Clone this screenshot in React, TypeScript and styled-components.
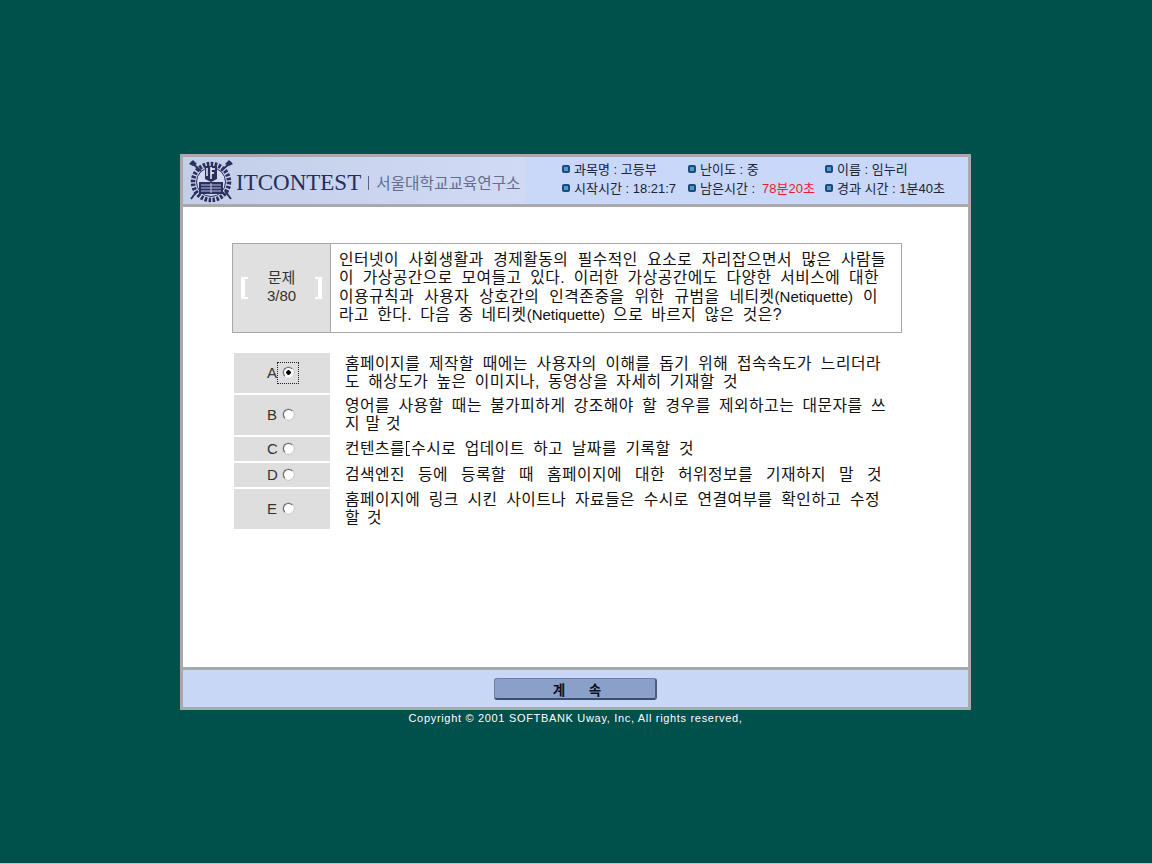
import React from 'react'
import styled, { createGlobalStyle } from 'styled-components'

const bodyFont = `"Liberation Sans", "Noto Sans CJK KR", sans-serif`

const GlobalStyle = createGlobalStyle`
	html,
	body {
		margin: 0;
		padding: 0;
		background: #00504c;
		font-family: ${bodyFont};
	}

	* {
		box-sizing: border-box;
	}
`

const Page = styled.div`
	width: 1152px;
	height: 864px;
	padding: 154px 0 0 180px;
	overflow: hidden;
	background: #00504c;
	border-bottom: 1px solid #a9cdc9;
`

const Window = styled.div`
	width: 791px;
	height: 556px;
	border: 3px solid #a9a9a9;
	background: #fff;
	display: flex;
	flex-direction: column;
`

const Header = styled.header`
	height: 50px;
	border-bottom: 3px solid #a9a9a9;
	background: linear-gradient(90deg, #c3cee8 0, #d0daf5 340px, #c9d7f8 345px);
	display: flex;
	align-items: center;
`

const Brand = styled.div`
	width: 379px;
	padding: 1px 0 0 5px;
	display: flex;
	align-items: center;
`

const BrandName = styled.span`
	margin: 3px 0 0 2px;
	font-family: "Liberation Serif", serif;
	font-size: 23px;
	color: #262c5c;
`

const BrandOrg = styled.span`
	margin: 3px 0 0 7px;
	padding-left: 7px;
	border-left: 1px solid #5d6488;
	font-family: "Noto Sans CJK KR", sans-serif;
	font-size: 15.7px;
	line-height: 14px;
	color: #666c8e;
	white-space: nowrap;
`

const Info = styled.div`
	margin-top: -5px;
	display: grid;
	grid-template-columns: 126px 137px auto;
	grid-auto-rows: 19px;
	font-size: 13px;
	color: #20243a;
`

const InfoItem = styled.div`
	display: flex;
	align-items: center;
	gap: 4px;
	white-space: nowrap;
`

const Bullet = styled.i`
	width: 8px;
	height: 8px;
	border-radius: 2px;
	border: 2px solid #1d4a78;
	background: #4f9bd0;
`

const Alert = styled.span`
	color: #ea1c30;
	margin-left: 3px;
`

const Main = styled.main`
	flex: 1;
	padding: 36px 0 0 49px;
`

const Question = styled.section`
	width: 670px;
	height: 90px;
	border: 1px solid #a8a8a8;
	display: flex;
`

const QuestionNo = styled.div`
	width: 98px;
	padding: 0 8px;
	background: #e0e0e0;
	border-right: 1px solid #a8a8a8;
	display: flex;
	align-items: center;
	justify-content: space-between;
`

const Bracket = styled.i<{ $right?: boolean }>`
	width: 7px;
	height: 22px;
	border: 2px solid #fff;
	border-${p => (p.$right ? 'left' : 'right')}: 0;
	border-${p => (p.$right ? 'right' : 'left')}-width: 4px;
`

const QuestionTitle = styled.div`
	margin-top: -3px;
	font-size: 15px;
	line-height: 18px;
	text-align: center;
	color: #333;
`

const QuestionText = styled.div`
	padding: 7px 0 0 8px;
	line-height: 18.3px;
`

const Line = styled.div<{ $width: number }>`
	width: ${p => p.$width}px;
	font-size: 15.8px;
	letter-spacing: 0.5px;
	color: #111;
	text-align: justify;
	text-align-last: justify;
`

const Latin = styled.span`
	font-size: 15px;
	letter-spacing: 0;
`

const Options = styled.div`
	margin: 20px 0 0 2px;
	display: flex;
	flex-direction: column;
	gap: 2px;
`

const Option = styled.div<{ $height: number }>`
	height: ${p => p.$height}px;
	display: flex;
	align-items: center;
`

const OptionLabel = styled.label`
	width: 96px;
	height: 100%;
	padding: 0 0 1px 33px;
	background: #dedede;
	display: flex;
	align-items: center;
	font-size: 15px;
	color: #333;
`

const LabelLetter = styled.span`
	width: 11px;
`

const RadioBox = styled.span<{ $focus?: boolean }>`
	width: 22px;
	height: 22px;
	margin-left: -1px;
	border: 1px ${p => (p.$focus ? 'dotted #222' : 'solid transparent')};
	display: flex;
	align-items: center;
	justify-content: center;
`

const Radio = styled.span<{ $checked?: boolean }>`
	width: 11px;
	height: 11px;
	border-radius: 50%;
	background: ${p => (p.$checked ? 'radial-gradient(circle, #000 0 2px, #fff 2.5px)' : '#fff')};
	border: 1px solid;
	border-color: #666 #f4f4f4 #f4f4f4 #666;
	box-shadow: 0 0 0 0.5px #aaa;
`

const OptionText = styled.div`
	margin-left: 15px;
	line-height: 18px;
`

const Caret = styled.i`
	display: inline-block;
	width: 4px;
	height: 15px;
	margin: 0 1px;
	vertical-align: -2px;
	border: 1px solid #111;
	border-right: 0;
`

const Footer = styled.footer`
	height: 40px;
	border-top: 3px solid #a9a9a9;
	background: #c9d7f6;
	display: flex;
	align-items: center;
	justify-content: center;
`

const ContinueButton = styled.button`
	width: 163px;
	height: 22px;
	margin-left: -1px;
	padding: 0 0 0 5px;
	background: #8aa0c8;
	border: 1px solid #6b80a8;
	border-bottom: 2px solid #3b4d70;
	border-right: 2px solid #4a5d82;
	border-radius: 3px;
	font-family: ${bodyFont};
	font-size: 13.5px;
	font-weight: 700;
	color: #0a0f1e;
	word-spacing: 20px;
`

const Copyright = styled.div`
	width: 791px;
	margin-top: 2px;
	text-align: center;
	font-size: 11px;
	letter-spacing: 0.68px;
	color: #fff;
`

const Emblem = () => (
	<svg width="46" height="44" viewBox="0 0 46 44" fill="none">
		<circle cx="23" cy="23" r="18" stroke="#2b3060" strokeWidth="4.5" strokeDasharray="2.5 1.5" />
		<circle cx="23" cy="23" r="14.5" fill="#d3daf0" stroke="#2b3060" strokeWidth="1" />
		<path d="M3 3 L13 12 M43 3 L33 12 M9 32 L3 40 M37 32 L43 40" stroke="#2b3060" strokeWidth="2" />
		<path d="M1 5 L5 1 L9 5 L5 7 Z M45 5 L41 1 L37 5 L41 7 Z" fill="#2b3060" />
		<path d="M17 7 H29 V20 L23 23 L17 20 Z" fill="#2b3060" />
		<path d="M23 8 V20 M23 10 H27 M23 14 H26 M19 9 V17" stroke="#fff" strokeWidth="1.4" />
		<path d="M11 23 H35 V35 H11 Z" fill="#2b3060" />
		<path d="M13 26 H33 M13 29 H33 M13 32 H33 M23 24 V34" stroke="#c9d3ee" strokeWidth="0.9" />
	</svg>
)

const questionLines: [React.ReactNode, number][] = [
	['인터넷이 사회생활과 경제활동의 필수적인 요소로 자리잡으면서 많은 사람들', 547],
	['이 가상공간으로 모여들고 있다. 이러한 가상공간에도 다양한 서비스에 대한', 540],
	[<>이용규칙과 사용자 상호간의 인격존중을 위한 규범을 네티켓<Latin>(Netiquette)</Latin> 이</>, 539],
	[<>라고 한다. 다음 중 네티켓<Latin>(Netiquette)</Latin> 으로 바르지 않은 것은?</>, 443]
]

const options: { id: string; height: number; checked?: boolean; lines: [React.ReactNode, number][] }[] = [
	{
		id: 'A',
		height: 40,
		checked: true,
		lines: [
			['홈페이지를 제작할 때에는 사용자의 이해를 돕기 위해 접속속도가 느리더라', 536],
			['도 해상도가 높은 이미지나, 동영상을 자세히 기재할 것', 393]
		]
	},
	{
		id: 'B',
		height: 40,
		lines: [
			['영어를 사용할 때는 불가피하게 강조해야 할 경우를 제외하고는 대문자를 쓰', 541],
			['지 말 것', 56]
		]
	},
	{
		id: 'C',
		height: 24,
		lines: [
			[<>컨텐츠를<Caret />수시로 업데이트 하고 날짜를 기록할 것</>, 349]
		]
	},
	{
		id: 'D',
		height: 24,
		lines: [['검색엔진 등에 등록할 때 홈페이지에 대한 허위정보를 기재하지 말 것', 537]]
	},
	{
		id: 'E',
		height: 40,
		lines: [
			['홈페이지에 링크 시킨 사이트나 자료들은 수시로 연결여부를 확인하고 수정', 535],
			['할 것', 37]
		]
	}
]

export default function App() {
	return (
		<Page>
			<GlobalStyle />
			<Window>
				<Header>
					<Brand>
						<Emblem />
						<BrandName>ITCONTEST</BrandName>
						<BrandOrg>서울대학교교육연구소</BrandOrg>
					</Brand>
					<Info>
						<InfoItem><Bullet />과목명 : 고등부</InfoItem>
						<InfoItem><Bullet />난이도 : 중</InfoItem>
						<InfoItem><Bullet />이름 : 임누리</InfoItem>
						<InfoItem><Bullet />시작시간 : 18:21:7</InfoItem>
						<InfoItem><Bullet />남은시간 :<Alert>78분20초</Alert></InfoItem>
						<InfoItem><Bullet />경과 시간 : 1분40초</InfoItem>
					</Info>
				</Header>
				<Main>
					<Question>
						<QuestionNo>
							<Bracket />
							<QuestionTitle>문제<br />3/80</QuestionTitle>
							<Bracket $right />
						</QuestionNo>
						<QuestionText>
							{questionLines.map(([text, width]) => (
								<Line key={width} $width={width}>{text}</Line>
							))}
						</QuestionText>
					</Question>
					<Options>
						{options.map(option => (
							<Option key={option.id} $height={option.height}>
								<OptionLabel>
									<LabelLetter>{option.id}</LabelLetter>
									<RadioBox $focus={option.checked}>
										<Radio $checked={option.checked} />
									</RadioBox>
								</OptionLabel>
								<OptionText>
									{option.lines.map(([text, width]) => (
										<Line key={width} $width={width}>{text}</Line>
									))}
								</OptionText>
							</Option>
						))}
					</Options>
				</Main>
				<Footer>
					<ContinueButton>계 속</ContinueButton>
				</Footer>
			</Window>
			<Copyright>Copyright © 2001 SOFTBANK Uway, Inc, All rights reserved,</Copyright>
		</Page>
	)
}
